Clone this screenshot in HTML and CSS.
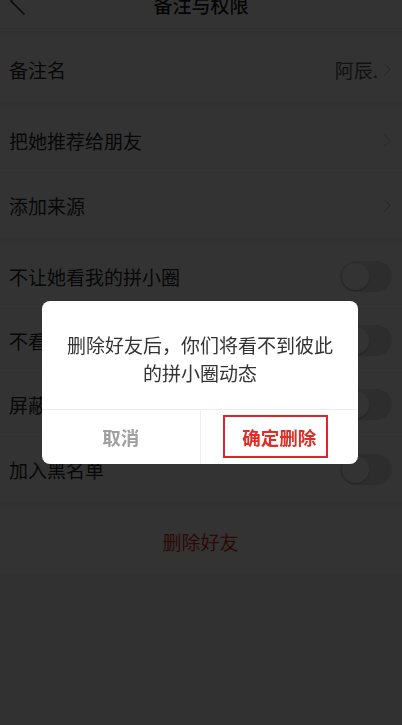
FILE: index.html
```html
<!DOCTYPE html>
<html lang="zh-CN">
<head>
<meta charset="utf-8">
<title>备注与权限</title>
<link rel="stylesheet" href="styles.css">
</head>
<body>
<div class="page">
  <header class="topbar">
    <svg class="back" width="30" height="30" viewBox="0 0 30 30" aria-hidden="true">
      <polyline points="24,1 11,14 24,27" fill="none" stroke="#333" stroke-width="1.6" stroke-linecap="round" stroke-linejoin="round"/>
    </svg>
    <div class="title">备注与权限</div>
    <div class="spacer"></div>
  </header>

  <section class="group">
    <div class="row">
      <span class="label">备注名</span>
      <span class="right"><span class="value">阿辰.</span><span class="chev"></span></span>
    </div>
  </section>

  <section class="group">
    <div class="row">
      <span class="label">把她推荐给朋友</span>
      <span class="right"><span class="chev"></span></span>
    </div>
    <div class="row">
      <span class="label">添加来源</span>
      <span class="right"><span class="chev"></span></span>
    </div>
  </section>

  <section class="group">
    <div class="row">
      <span class="label">不让她看我的拼小圈</span>
      <span class="toggle"><span class="knob"></span></span>
    </div>
    <div class="row">
      <span class="label">不看她的拼小圈</span>
      <span class="toggle"><span class="knob"></span></span>
    </div>
    <div class="row">
      <span class="label">屏蔽她的消息</span>
      <span class="toggle"><span class="knob"></span></span>
    </div>
    <div class="row">
      <span class="label">加入黑名单</span>
      <span class="toggle"><span class="knob"></span></span>
    </div>
  </section>

  <section class="group">
    <div class="row danger">删除好友</div>
  </section>
</div>

<div class="mask">
  <div class="dialog">
    <div class="message">删除好友后，你们将看不到彼此的拼小圈动态</div>
    <div class="actions">
      <div class="btn cancel">取消</div>
      <div class="btn confirm">确定删除<span class="mark"></span></div>
    </div>
  </div>
</div>
</body>
</html>
```

FILE: styles.css
```css
* { box-sizing: border-box; }

html, body {
  margin: 0;
  padding: 0;
  height: 100%;
  overflow: hidden;
}

body {
  font-family: "Noto Sans CJK SC", "Noto Sans", sans-serif;
  background: #ffffff;
  color: #2a2a2a;
}

.page {
  width: 402px;
  height: 725px;
  background: #f2f2f2;
}

.topbar {
  height: 29px;
  background: #ffffff;
  display: grid;
  grid-template-columns: 40px 1fr 40px;
  align-items: start;
  border-bottom: 1px solid #e6e6e6;
  overflow: hidden;
}

.back {
  margin-top: -13px;
  margin-left: 0;
  display: block;
}

.title {
  text-align: center;
  font-size: 19px;
  line-height: 20px;
  margin-top: -5px;
  font-weight: 500;
  color: #222;
}

.group {
  margin-top: 8px;
  background: #ffffff;
}

.row {
  height: 64px;
  padding: 0 10px 0 9px;
  display: flex;
  align-items: center;
  justify-content: space-between;
  font-size: 19px;
  border-bottom: 1px solid #eeeeee;
}

.group .row:last-child { border-bottom: none; }

.label { color: #2a2a2a; }

.right {
  display: flex;
  align-items: center;
  gap: 2px;
}

.value {
  color: #555;
  font-size: 19px;
}

.chev {
  width: 9px;
  height: 9px;
  border-top: 1.5px solid #c4c4c4;
  border-right: 1.5px solid #c4c4c4;
  transform: rotate(45deg);
  margin: 0 3px 0 0;
}

.toggle {
  width: 52px;
  height: 31px;
  border-radius: 16px;
  background: #e2e2e2;
  padding: 2px;
  display: flex;
  align-items: center;
}

.knob {
  width: 27px;
  height: 27px;
  border-radius: 50%;
  background: #ffffff;
  box-shadow: 0 1px 2px rgba(0, 0, 0, 0.25);
}

.danger {
  justify-content: center;
  color: #e02e24;
}

.mask {
  position: fixed;
  inset: 0;
  background: rgba(0, 0, 0, 0.8);
  display: flex;
  justify-content: center;
  align-items: flex-start;
  padding: 301px 0 0 2px;
}

.dialog {
  width: 316px;
  background: #ffffff;
  border-radius: 8px;
  overflow: hidden;
  margin-left: -4px;
}

.message {
  padding: 30px 22px 22px;
  text-align: center;
  font-size: 19px;
  line-height: 28px;
  color: #333;
}

.actions {
  height: 55px;
  display: flex;
  border-top: 1px solid #eeeeee;
}

.btn {
  flex: 1;
  display: flex;
  align-items: center;
  justify-content: center;
  font-size: 18.5px;
  font-weight: 700;
  position: relative;
}

.cancel {
  color: #a0a0a0;
  border-right: 1px solid #eeeeee;
}

.confirm {
  color: #e02e24;
}

.mark {
  position: absolute;
  left: 22px;
  top: 5px;
  width: 105px;
  height: 43px;
  border: 2px solid #e3232a;
}
```
